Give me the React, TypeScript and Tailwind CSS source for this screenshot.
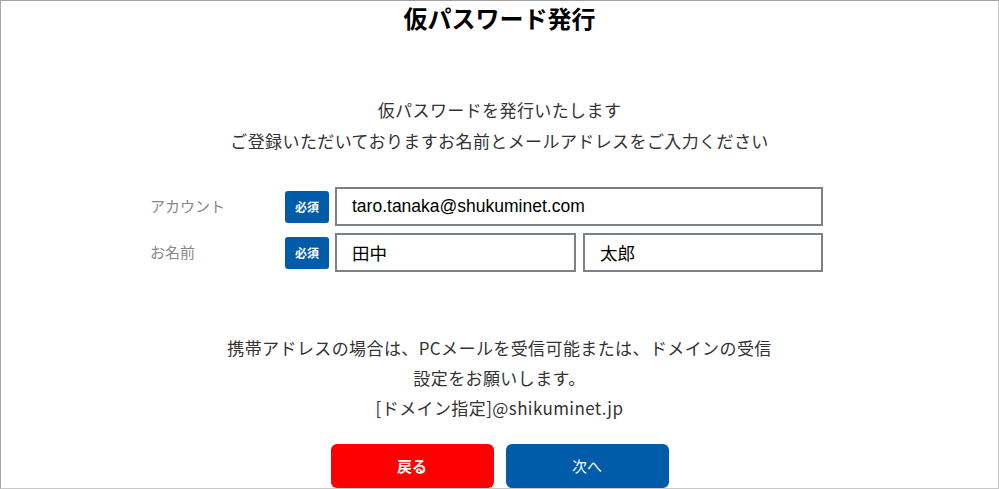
const jp = "font-['Noto_Sans_CJK_JP','Noto_Sans',sans-serif]"

const Badge = () => (
  <span className="mr-[6px] flex h-[32px] w-[44px] items-center justify-center rounded-[3px] bg-[#005ca8] text-[12px] font-bold text-white">
    必須
  </span>
)

const Field = ({ value, width }: { value: string; width: string }) => (
  <input
    type="text"
    defaultValue={value}
    className={`h-[39px] ${width} border-2 border-[#7d8187] bg-white px-[15px] font-['Liberation_Sans','Noto_Sans_CJK_JP',sans-serif] text-[17.5px] text-black outline-none`}
  />
)

export default function App() {
  return (
    <div className={`${jp} h-[489px] w-[999px] overflow-hidden border border-[#c8c8c8] border-t-[#a0a0a0] border-l-[#a8a8a8] bg-white`}>
      <h1 className="text-center text-[24px] font-bold leading-[34px] text-black">仮パスワード発行</h1>

      <div className="mt-[59px] text-center text-[17px] leading-[31px] tracking-[0.4px] text-[#333]">
        <p>仮パスワードを発行いたします</p>
        <p>ご登録いただいておりますお名前とメールアドレスをご入力ください</p>
      </div>

      <form className="mt-[31px] flex flex-col gap-[7px] pl-[149px]">
        <div className="flex items-center">
          <label className="w-[135px] text-[15px] text-[#888]">アカウント</label>
          <Badge />
          <Field value="taro.tanaka@shukuminet.com" width="w-[488px]" />
        </div>
        <div className="flex items-center">
          <label className="w-[135px] text-[15px] text-[#888]">お名前</label>
          <Badge />
          <div className="flex gap-[7px]">
            <Field value="田中" width="w-[241px]" />
            <Field value="太郎" width="w-[240px]" />
          </div>
        </div>
      </form>

      <div className="mt-[61px] text-center text-[17px] leading-[30px] tracking-[0.4px] text-[#333]">
        <p>携帯アドレスの場合は、PCメールを受信可能または、ドメインの受信</p>
        <p>設定をお願いします。</p>
        <p>[ドメイン指定]@shikuminet.jp</p>
      </div>

      <div className="mt-[21px] flex justify-center gap-[12px]">
        <button className="h-[44px] w-[163px] rounded-[6px] bg-[#ff0000] text-[15px] font-bold text-white">戻る</button>
        <button className="h-[44px] w-[163px] rounded-[6px] bg-[#005ca8] text-[15px] text-white">次へ</button>
      </div>
    </div>
  )
}
